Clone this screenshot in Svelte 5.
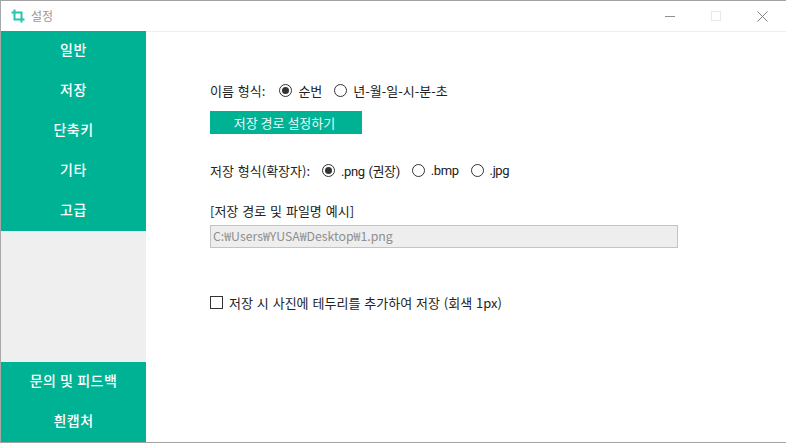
<script>
  const topMenu = ['일반', '저장', '단축키', '기타', '고급'];
  const bottomMenu = ['문의 및 피드백', '흰캡처'];
</script>

<div class="window">
  <header class="titlebar">
    <svg class="logo" width="14" height="14" viewBox="0 0 14 14" fill="none" stroke="#27c4ae" stroke-width="2">
      <path d="M3.5 0.5V10.5H13.5" />
      <path d="M0.5 3.5H10.5V13.5" />
    </svg>
    <span class="title">설정</span>
    <div class="controls">
      <span class="ctl"><i class="min"></i></span>
      <span class="ctl"><i class="max"></i></span>
      <span class="ctl">
        <svg width="11" height="11" viewBox="0 0 11 11" stroke="#808080" stroke-width="1">
          <path d="M0.5 0.5L10.5 10.5M10.5 0.5L0.5 10.5" />
        </svg>
      </span>
    </div>
  </header>

  <div class="body">
    <nav class="sidebar">
      <div class="group">
        {#each topMenu as item}
          <button class="item">{item}</button>
        {/each}
      </div>
      <div class="group">
        {#each bottomMenu as item}
          <button class="item">{item}</button>
        {/each}
      </div>
    </nav>

    <main class="content">
      <div class="row">
        <span class="label">이름 형식:</span>
        <span class="radio on"></span><span class="opt">순번</span>
        <span class="radio"></span><span class="opt">년-월-일-시-분-초</span>
      </div>
      <button class="path-btn">저장 경로 설정하기</button>
      <div class="row format">
        <span class="label">저장 형식(확장자):</span>
        <span class="radio on"></span><span class="opt">.png (권장)</span>
        <span class="radio"></span><span class="opt">.bmp</span>
        <span class="radio"></span><span class="opt">.jpg</span>
      </div>
      <div class="example">[저장 경로 및 파일명 예시]</div>
      <div class="path">C:₩Users₩YUSA₩Desktop₩1.png</div>
      <div class="check-row">
        <span class="check"></span>
        <span>저장 시 사진에 테두리를 추가하여 저장 (회색 1px)</span>
      </div>
    </main>
  </div>
</div>

<style>
  :global(body) {
    margin: 0;
    background: #fff;
    font-family: 'Noto Sans CJK KR', 'Noto Sans', sans-serif;
    font-size: 13px;
    word-spacing: 1px;
    color: #222;
  }

  .window {
    width: 786px;
    height: 443px;
    box-sizing: border-box;
    border-top: 1px solid #a3a3a3;
    border-bottom: 1px solid #a3a3a3;
    border-left: 1px solid #a8a8a8;
    display: flex;
    flex-direction: column;
    overflow: hidden;
  }

  .titlebar {
    height: 30px;
    flex: none;
    display: flex;
    align-items: center;
    padding-left: 10px;
  }

  .logo {
    margin-right: 6px;
  }

  .title {
    color: #999;
    font-size: 12px;
    margin-top: -2px;
  }

  .controls {
    margin-left: auto;
    display: flex;
    margin-right: 1px;
    align-items: center;
  }

  .ctl {
    width: 46px;
    height: 30px;
    display: flex;
    align-items: center;
    justify-content: center;
  }

  .min {
    display: block;
    width: 10px;
    height: 1px;
    background: #909090;
  }

  .max {
    display: block;
    width: 8px;
    height: 8px;
    border: 1px solid #e8e8e8;
  }

  .body {
    flex: 1;
    display: flex;
    min-height: 0;
  }

  .sidebar {
    width: 145px;
    flex: none;
    background: #efefef;
    display: flex;
    flex-direction: column;
    justify-content: space-between;
  }

  .item {
    display: block;
    width: 100%;
    height: 40px;
    border: none;
    padding: 0 0 4px;
    background: #00b294;
    color: #fff;
    font: inherit;
    font-size: 14px;
    font-weight: 500;
    letter-spacing: 0.5px;
  }

  .content {
    flex: 1;
    border-top: 1px solid #eeeeee;
    padding: 46px 0 0 64px;
  }

  .row {
    display: flex;
    align-items: center;
    height: 24px;
  }

  .label {
    margin-right: 14px;
  }

  .format .label {
    margin-right: 12px;
  }

  .radio {
    width: 11px;
    height: 11px;
    border: 1px solid #333;
    border-radius: 50%;
    margin-right: 6px;
    box-sizing: content-box;
    position: relative;
  }

  .radio.on::after {
    content: '';
    position: absolute;
    inset: 2px;
    border-radius: 50%;
    background: #333;
  }

  .opt {
    margin-right: 12px;
  }

  .format .opt {
    font-family: Roboto, 'Noto Sans CJK KR', sans-serif;
    letter-spacing: -0.4px;
  }

  .path-btn {
    display: block;
    width: 152px;
    height: 23px;
    margin-top: 9px;
    border: none;
    padding: 0 3px 0 0;
    background: #00b294;
    color: #e8f8f5;
    font: inherit;
  }

  .format {
    margin-top: 24px;
  }

  .example {
    margin-top: 20px;
    height: 18px;
    line-height: 18px;
  }

  .path {
    width: 468px;
    height: 23px;
    box-sizing: border-box;
    margin-top: 5px;
    padding-left: 2px;
    border: 1px solid #c4c4c4;
    background: #eeeeee;
    color: #8f8f8f;
    font-size: 12.3px;
    line-height: 21px;
  }

  .check-row {
    display: flex;
    align-items: center;
    margin-top: 45px;
    height: 18px;
  }

  .check {
    width: 11px;
    height: 11px;
    border: 1px solid #333;
    margin-right: 6px;
  }
</style>
